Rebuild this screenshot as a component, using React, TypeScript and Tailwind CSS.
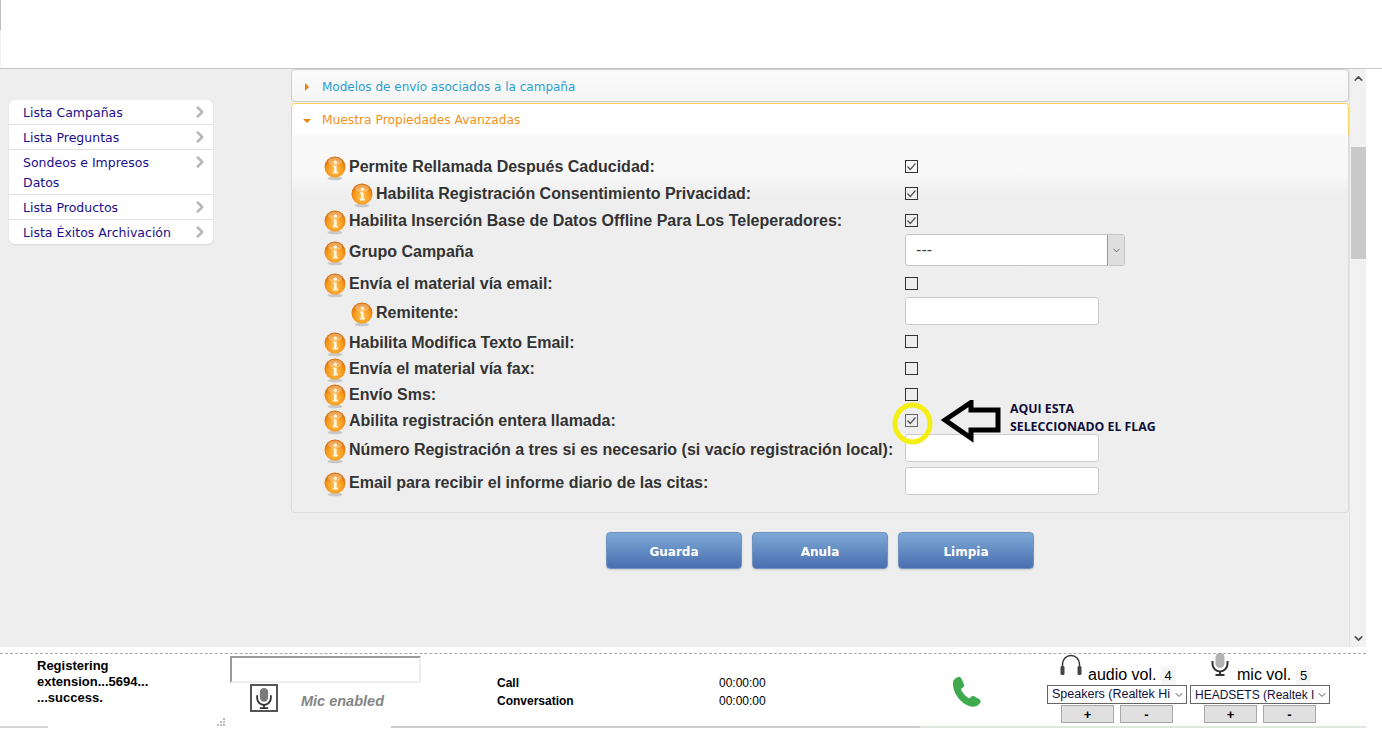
import { ChevronRight, ChevronUp, ChevronDown } from 'lucide-react';

const sideItems = [
  'Lista Campañas',
  'Lista Preguntas',
  'Sondeos e Impresos Datos',
  'Lista Productos',
  'Lista Éxitos Archivación',
];

type Row = {
  label: string;
  control: 'on' | 'off' | 'select' | 'input' | 'flag';
  rowClass: string;
  labelClass?: string;
  shift?: string;
  sub?: boolean;
};

const rows: Row[] = [
  { label: 'Permite Rellamada Después Caducidad:', control: 'on', rowClass: 'h-[27px]' },
  { label: 'Habilita Registración Consentimiento Privacidad:', control: 'on', rowClass: 'h-[27px]', sub: true },
  { label: 'Habilita Inserción Base de Datos Offline Para Los Teleperadores:', control: 'on', rowClass: 'h-[27px]' },
  { label: 'Grupo Campaña', control: 'select', rowClass: 'h-[34px]', labelClass: 'pt-[2px]', shift: '-mt-[2px]' },
  { label: 'Envía el material vía email:', control: 'off', rowClass: 'h-[30px]', labelClass: 'pt-[2px]' },
  { label: 'Remitente:', control: 'input', rowClass: 'h-[29px]', shift: '-mt-[3px]', sub: true },
  { label: 'Habilita Modifica Texto Email:', control: 'off', rowClass: 'h-[29px]', labelClass: 'pt-[2px]' },
  { label: 'Envía el material vía fax:', control: 'off', rowClass: 'h-[25px]' },
  { label: 'Envío Sms:', control: 'off', rowClass: 'h-[26px]', labelClass: 'pt-[2px]' },
  { label: 'Abilita registración entera llamada:', control: 'flag', rowClass: 'h-[26px]', labelClass: 'pt-[2px]' },
  { label: 'Número Registración a tres si es necesario (si vacío registración local):', control: 'input', rowClass: 'h-[33px]', shift: '-mt-[3px]' },
  { label: 'Email para recibir el informe diario de las citas:', control: 'input', rowClass: 'h-[32px]', labelClass: 'pt-[2px]', shift: '-mt-[2px]' },
];

function InfoIcon({ id }: { id: string }) {
  return (
    <span className="w-[25px] h-[22px] shrink-0 block">
      <svg width="22" height="26" viewBox="0 0 22 26" className="block">
        <defs>
          <radialGradient id={id} cx="50%" cy="65%" r="62%">
            <stop offset="0%" stopColor="#ffc557" />
            <stop offset="60%" stopColor="#f79a1e" />
            <stop offset="100%" stopColor="#d66c08" />
          </radialGradient>
        </defs>
        <ellipse cx="11" cy="22.500" rx="7.500" ry="1.800" fill="#c8c8c8" />
        <circle cx="11" cy="11" r="10.500" fill={`url(#${id})`} />
        <ellipse cx="11" cy="5.500" rx="7" ry="4" fill="#ffffff" opacity="0.3" />
        <circle cx="11.400" cy="6.200" r="1.600" fill="#fff6df" />
        <path d="M8.800 9.400h3.800v6.400h1.300v1.600H8.800v-1.600h1.200v-4.800H8.800z" fill="#fff6df" />
      </svg>
    </span>
  );
}

function CheckBox({ checked, faded }: { checked: boolean; faded?: boolean }) {
  return (
    <span className={`w-[13px] h-[13px] border flex items-center justify-center ${faded ? 'border-[#666]' : 'border-[#333]'}`}>
      {checked && (
        <svg width="11" height="11" viewBox="0 0 11 11">
          <path d="M1.500 5.500l2.800 3 5.200-6" fill="none" stroke="#555" strokeWidth="1.300" />
        </svg>
      )}
    </span>
  );
}

function Control({ type, shift }: { type: Row['control']; shift?: string }) {
  if (type === 'on') return <CheckBox checked />;
  if (type === 'flag') return <CheckBox checked faded />;
  if (type === 'off') return <CheckBox checked={false} />;
  if (type === 'input') {
    return <div className={`w-[194px] h-[28px] bg-white border border-[#ccc] rounded-[3px] ${shift ?? ''}`} />;
  }
  return (
    <div className={`w-[220px] h-[32px] bg-white border border-[#c4c4c4] rounded-[3px] flex overflow-hidden ${shift ?? ''}`}>
      <span className="flex-1 pl-[10px] flex items-center text-[15px] text-[#444] font-['DejaVu_Sans',sans-serif]">---</span>
      <span className="w-[17px] bg-[#dfdfdf] border-l border-[#999] flex items-center justify-center">
        <ChevronDown size={11} color="#555" />
      </span>
    </div>
  );
}

function MicGlyph({ size, color }: { size: number; color: string }) {
  return (
    <svg width={size} height={size} viewBox="0 0 24 24">
      <rect x="7.500" y="1" width="9" height="15" rx="4.500" fill={color} opacity="0.65" />
      <path d="M4.500 9v3a7.500 7.500 0 0 0 15 0V9" fill="none" stroke="#333" strokeWidth="2" />
      <path d="M12 19.500V22M7.500 23h9" stroke="#333" strokeWidth="2" fill="none" />
    </svg>
  );
}

function VolButton({ text }: { text: string }) {
  return (
    <button className="w-[53px] h-[18px] bg-[#e0e0e0] border border-[#a8a8a8] text-[13px] leading-none font-bold text-black font-['Liberation_Sans',sans-serif]">
      {text}
    </button>
  );
}

function DeviceSelect({ text, textClass }: { text: string; textClass: string }) {
  return (
    <div className={`w-[140px] h-[19px] border border-[#666] bg-white flex items-center pl-[4px] text-[#10103c] whitespace-nowrap overflow-hidden ${textClass}`}>
      <span className="w-[120px] overflow-hidden">{text}</span>
      <ChevronDown size={12} color="#555" className="ml-[1px] shrink-0" />
    </div>
  );
}

export default function App() {
  return (
    <div className="relative w-[1382px] h-[730px] overflow-hidden bg-white flex flex-col font-['Liberation_Sans',sans-serif]">
      {/* top band */}
      <div className="h-[69px] shrink-0 bg-white border-b border-[#c6c6c6]">
        <div className="w-px h-[30px] bg-[#bdbdbd]" />
        <div className="w-px h-[38px] bg-[#f3f3f3]" />
      </div>

      {/* middle */}
      <div className="h-[578px] shrink-0 flex">
        <div className="w-[1366px] flex bg-[#eeeeee]">
          {/* side menu */}
          <div className="w-[291px] shrink-0 pl-[9px] pt-[31px]">
            <ul className="w-[204px] bg-white rounded-[6px] shadow-[0_1px_2px_rgba(0,0,0,0.08)] font-['DejaVu_Sans',sans-serif] text-[12.500px] leading-[20px] text-[#1a0d8c]">
              {sideItems.map((item, i) => (
                <li key={item} className={`flex justify-between pl-[14px] pr-[4px] pt-[3px] pb-[1px] ${i < sideItems.length - 1 ? 'border-b border-[#e2e2e2]' : ''}`}>
                  <span className={i === 2 ? 'w-[150px]' : ''}>{item}</span>
                  <ChevronRight size={18} strokeWidth={3.400} color="#b8b8b8" className="shrink-0" />
                </li>
              ))}
            </ul>
          </div>

          {/* content */}
          <div className="w-[1058px] shrink-0 flex flex-col">
            <div className="h-[33px] shrink-0 border border-[#cfcfcf] rounded-[4px] bg-gradient-to-b from-[#fbfbfb] to-[#f5f5f5] flex items-center pl-[13px] pt-[2px] font-['DejaVu_Sans',sans-serif] text-[12px] text-[#2a9fd0]">
              <span className="w-0 h-0 border-y-[4px] border-y-transparent border-l-[4px] border-l-[#e8820c] mr-[13px]" />
              Modelos de envío asociados a la campaña
            </div>
            <div className="h-[32px] mt-[1px] shrink-0 border border-b-0 border-[#f7d660] rounded-t-[4px] bg-white flex items-center pl-[11px] pt-[2px] font-['DejaVu_Sans',sans-serif] text-[12.250px] text-[#f0921a]">
              <span className="w-0 h-0 border-x-[4px] border-x-transparent border-t-[4px] border-t-[#e8820c] mr-[11px]" />
              Muestra Propiedades Avanzadas
            </div>
            <div className="h-[378px] shrink-0 border border-t-0 border-[#dcdcdc] rounded-b-[4px] pt-[18px] bg-gradient-to-b from-[#f9f9f9] from-[10%] to-[#eeeeee] to-[16%]">
              {rows.map((row, i) => (
                <div key={row.label} className={`grid grid-cols-[613px_1fr] items-center ${row.rowClass}`}>
                  <div className={`flex items-center text-[16px] leading-[20px] font-bold text-[#333] whitespace-nowrap ${row.sub ? 'pl-[59px]' : 'pl-[32px]'} ${row.labelClass ?? ''}`}>
                    <InfoIcon id={`info-${i}`} />
                    {row.label}
                  </div>
                  <Control type={row.control} shift={row.shift} />
                </div>
              ))}
            </div>
            <div className="flex gap-[10px] pl-[315px] pt-[19px]">
              {['Guarda', 'Anula', 'Limpia'].map((b) => (
                <button key={b} className="w-[136px] h-[37px] pt-[2px] rounded-[4px] border border-[#6f92c0] bg-gradient-to-b from-[#7ea9d6] to-[#4b6fb0] shadow-[0_1px_2px_rgba(0,0,0,0.15)] text-white text-[12px] font-bold font-['DejaVu_Sans',sans-serif]">
                  {b}
                </button>
              ))}
            </div>
          </div>

          {/* scrollbar */}
          <div className="w-[17px] shrink-0 flex flex-col items-center bg-[#f1f1f1] border-l border-[#e2e2e2]">
            <ChevronUp size={13} strokeWidth={3} color="#505050" className="mt-[3px]" />
            <div className="w-[15px] h-[112px] mt-[62px] bg-[#c9c9c9]" />
            <ChevronDown size={13} strokeWidth={3} color="#505050" className="mt-auto mb-[2px]" />
          </div>
        </div>
      </div>

      {/* softphone bar */}
      <div className="h-[81px] shrink-0 flex flex-col">
        <div className="w-[1366px] mt-[6px] h-0 shrink-0 border-t border-dashed border-[#aaa]" />
        <div className="flex-1 flex text-[12px] text-black">
          <div className="w-[230px] shrink-0 pl-[37px] pt-[4px] relative font-bold text-[13px] leading-[16px]">
            <p className="w-[125px]">Registering extension...5694... ...success.</p>
            <svg width="9" height="9" viewBox="0 0 9 9" className="absolute left-[216px] top-[63px]">
              <path d="M7 1h2v2H7zM4 4h2v2H4zM7 4h2v2H7zM1 7h2v2H1zM4 7h2v2H4zM7 7h2v2H7z" fill="#bbb" />
            </svg>
          </div>
          <div className="w-[267px] shrink-0 pt-[2px]">
            <div className="w-[191px] h-[27px] border-2 border-[#9a9a9a] border-r-[#eee] border-b-[#eee]" />
            <div className="flex items-center">
              <span className="ml-[20px] w-[28px] h-[28px] border-2 border-[#555] flex items-center justify-center">
                <MicGlyph size={22} color="#333" />
              </span>
              <span className="ml-[23px] mt-[8px] text-[14.500px] font-bold italic text-[#858585]">Mic enabled</span>
            </div>
          </div>
          <div className="w-[222px] shrink-0 pt-[20px] font-bold leading-[18px]">
            <p>Call</p>
            <p>Conversation</p>
          </div>
          <div className="w-[233px] shrink-0 pt-[20px] leading-[18px]">
            <p>00:00:00</p>
            <p>00:00:00</p>
          </div>
          <div className="w-[95px] shrink-0 pt-[22px]">
            <svg width="30" height="32" viewBox="0 0 30 32">
              <path d="M1 6.500C1.500 3 5 .8 7.500 1c1.200.2 1.800 1 2.300 2.200l2.200 5.300c.4 1.100.1 2-.9 2.800l-2.200 1.800c1.300 3.700 4.300 7.300 8.200 9.400l2.200-1.900c.9-.8 1.900-.9 2.900-.3l5.200 3c1.100.7 1.500 1.600 1.100 2.800-.9 2.500-4 5-7.500 4.700C9.500 29.500.2 17 1 6.500z" fill="#3fa94d" />
            </svg>
          </div>
          <div className="flex gap-[3px]">
            <div className="w-[140px] flex flex-col">
              <div className="h-[31px] flex items-end relative">
                <svg width="24" height="24" viewBox="0 0 24 24" className="absolute left-[12px] top-[-1px]">
                  <path d="M3.500 15V11a8.500 8.500 0 0 1 17 0v4" fill="none" stroke="#333" strokeWidth="1.500" />
                  <rect x="1.500" y="13" width="4" height="9" rx="1.500" fill="#444" />
                  <rect x="18.500" y="13" width="4" height="9" rx="1.500" fill="#444" />
                </svg>
                <span className="ml-[41px] mb-[1px] text-[16px] leading-[18px]">audio vol.</span>
                <span className="ml-[4px] w-[15px] h-[19px] bg-[#f5f5f5] text-[13px] leading-[20px] text-center">4</span>
              </div>
              <DeviceSelect text="Speakers (Realtek Hi" textClass="text-[12.500px]" />
              <div className="flex gap-[6px] pl-[14px] mt-[1px]">
                <VolButton text="+" />
                <VolButton text="-" />
              </div>
            </div>
            <div className="w-[140px] flex flex-col">
              <div className="h-[31px] flex items-end relative">
                <span className="absolute left-[18px] top-[-2px]">
                  <MicGlyph size={24} color="#888" />
                </span>
                <span className="ml-[47px] mb-[1px] text-[16px] leading-[18px]">mic vol.</span>
                <span className="ml-[5px] w-[15px] h-[19px] bg-[#f5f5f5] text-[13px] leading-[20px] text-center">5</span>
              </div>
              <DeviceSelect text="HEADSETS (Realtek I" textClass="text-[12px]" />
              <div className="flex gap-[6px] pl-[14px] mt-[1px]">
                <VolButton text="+" />
                <VolButton text="-" />
              </div>
            </div>
          </div>
        </div>
        <div className="h-[2px] shrink-0 flex">
          <div className="w-[48px] bg-[#d4d4d4]" />
          <div className="w-[343px] bg-white" />
          <div className="w-[529px] bg-[#cfcfcf]" />
          <div className="w-[446px] bg-[#dfe8dc]" />
        </div>
      </div>

      {/* annotation drawn over the screenshot */}
      <svg width="120" height="50" viewBox="0 0 120 50" className="absolute left-[890px] top-[400px]">
        <ellipse cx="22.500" cy="23.500" rx="17.500" ry="18.500" fill="none" stroke="#f4ee12" strokeWidth="5" />
        <path d="M55 20L81 2.500V10H108V30H81V38Z" fill="none" stroke="#000" strokeWidth="5" />
      </svg>
      <div className="absolute left-[1010px] top-[400px] text-[12.300px] leading-[18px] font-bold text-[#10103c] font-['Open_Sans',sans-serif]">
        <p>AQUI ESTA</p>
        <p>SELECCIONADO EL FLAG</p>
      </div>
    </div>
  );
}
